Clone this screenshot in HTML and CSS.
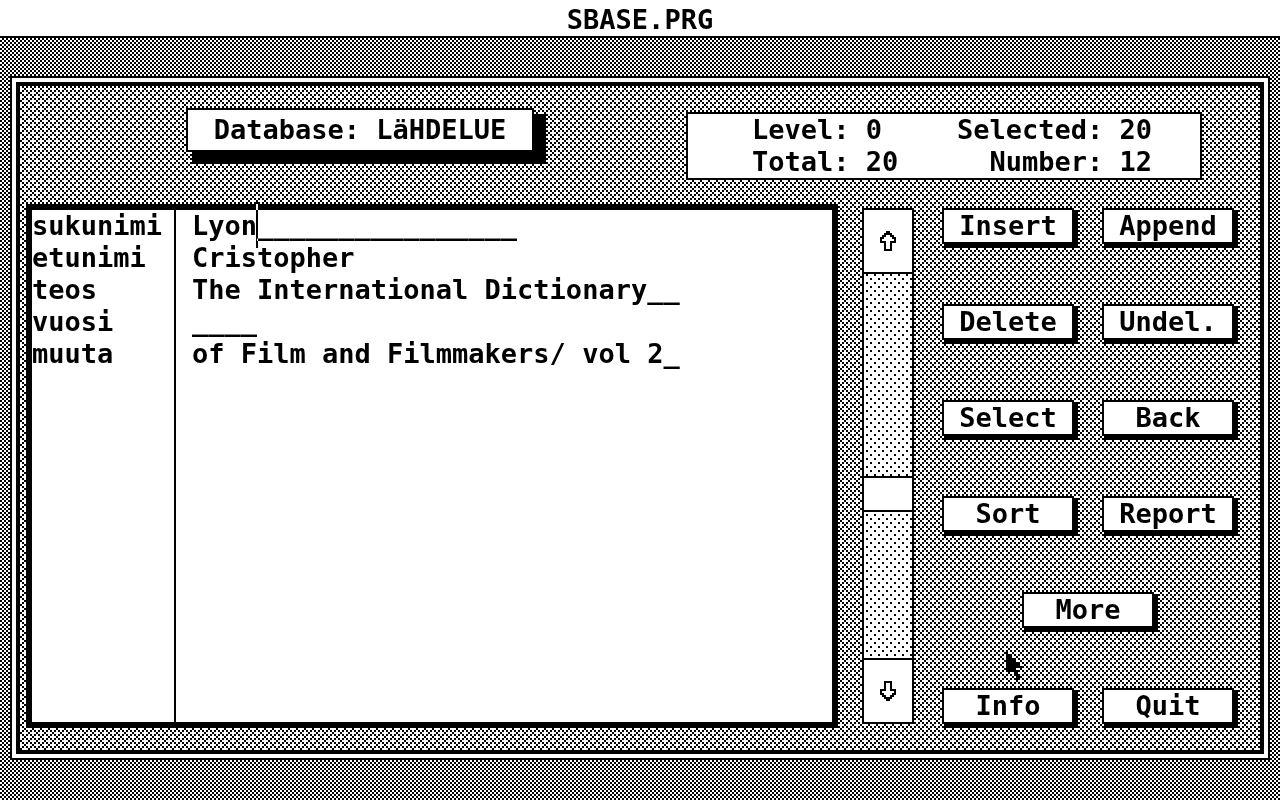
FILE: index.html
```html
<!DOCTYPE html>
<html lang="fi">
<head>
    <meta charset="UTF-8">
    <title>SBASE.PRG</title>
    <link rel="stylesheet" href="styles.css">
</head>
<body>
    <header class="menubar">SBASE.PRG</header>
    <main class="desktop">
        <div class="window">
            <div class="top">
                <h1 class="db-name">Database: LäHDELUE</h1>
                <div class="status">
                    <div class="status-left">
                        <div>Level: 0</div>
                        <div>Total: 20</div>
                    </div>
                    <div class="status-right">
                        <div>Selected: 20</div>
                        <div>Number: 12</div>
                    </div>
                </div>
            </div>
            <div class="content">
                <form class="record">
                    <div class="row">
                        <label for="sukunimi">sukunimi</label>
                        <div class="field">
                            <input type="text" id="sukunimi" value="Lyon________________">
                            <span class="caret"></span>
                        </div>
                    </div>
                    <div class="row">
                        <label for="etunimi">etunimi</label>
                        <div class="field"><input type="text" id="etunimi" value="Cristopher"></div>
                    </div>
                    <div class="row">
                        <label for="teos">teos</label>
                        <div class="field"><input type="text" id="teos" value="The International Dictionary__"></div>
                    </div>
                    <div class="row">
                        <label for="vuosi">vuosi</label>
                        <div class="field"><input type="text" id="vuosi" value="____"></div>
                    </div>
                    <div class="row">
                        <label for="muuta">muuta</label>
                        <div class="field"><input type="text" id="muuta" value="of Film and Filmmakers/ vol 2_"></div>
                    </div>
                    <div class="row rest">
                        <div class="blank"></div>
                        <div class="field"></div>
                    </div>
                </form>
                <div class="scrollbar">
                    <button type="button" class="arrow" aria-label="Up">
                        <svg width="16" height="20" viewBox="0 0 8 10" shape-rendering="crispEdges">
                            <path d="M3 0h2v1h1v1h1v1h1v3h-2v4h-4v-4h-2v-3h1v-1h1v-1h1zM3 2v1h-1v1h-1v1h2v4h2v-4h2v-1h-1v-1h-1v-1z" fill-rule="evenodd"/>
                        </svg>
                    </button>
                    <div class="track">
                        <div class="before"></div>
                        <div class="thumb"></div>
                        <div class="after"></div>
                    </div>
                    <button type="button" class="arrow" aria-label="Down">
                        <svg width="16" height="20" viewBox="0 0 8 10" shape-rendering="crispEdges">
                            <path d="M3 10h2v-1h1v-1h1v-1h1v-3h-2v-4h-4v4h-2v3h1v1h1v1h1zM3 8v-1h-1v-1h-1v-1h2v-4h2v4h2v1h-1v1h-1v1z" fill-rule="evenodd"/>
                        </svg>
                    </button>
                </div>
                <div class="commands">
                    <button type="button" class="btn">Insert</button>
                    <button type="button" class="btn">Append</button>
                    <button type="button" class="btn">Delete</button>
                    <button type="button" class="btn">Undel.</button>
                    <button type="button" class="btn">Select</button>
                    <button type="button" class="btn">Back</button>
                    <button type="button" class="btn">Sort</button>
                    <button type="button" class="btn">Report</button>
                    <button type="button" class="btn wide">More</button>
                    <button type="button" class="btn">Info</button>
                    <button type="button" class="btn">Quit</button>
                </div>
            </div>
        </div>
    </main>
    <svg class="mouse" width="16" height="28" viewBox="0 0 8 14" shape-rendering="crispEdges">
        <path d="M0 0h1v1h1v1h1v1h1v1h1v1h1v1h1v1h1v1h-3v1h1v2h1v3h-2v-2h-1v-2h-1v-1h-1v1h-2z"/>
    </svg>
</body>
</html>
```

FILE: styles.css
```css
* {
    box-sizing: border-box;
}
body {
    margin: 0;
    min-height: 100vh;
    display: flex;
    flex-direction: column;
    background: #fff;
    color: #000;
    font: bold 27px/32px "DejaVu Sans Mono", monospace;
}
button, input {
    font: inherit;
    color: inherit;
    margin: 0;
    padding: 0;
    border: 0;
    border-radius: 0;
    background: #fff;
}
.menubar {
    padding-top: 4px;
    text-align: center;
    border-bottom: 2px solid #000;
}

/* dither fills, all aligned to the screen */
.desktop, .window, .track {
    background-color: #fff;
    background-size: 8px 8px;
    background-attachment: fixed;
}
.desktop {
    flex: 1;
    display: flex;
    padding: 38px 10px 40px;
    background-image: url("data:image/svg+xml,%3Csvg xmlns='http://www.w3.org/2000/svg' width='8' height='8' viewBox='0 0 4 4' shape-rendering='crispEdges'%3E%3Cpath d='M0 0h1v1h-1zM2 0h1v1h-1zM1 1h1v1h-1zM3 1h1v1h-1zM0 2h1v1h-1zM2 2h1v1h-1zM1 3h1v1h-1zM3 3h1v1h-1z'/%3E%3C/svg%3E");
}
.window {
    flex: 1;
    display: flex;
    flex-direction: column;
    border: 4px solid #000;
    margin: 6px;
    box-shadow: 0 0 0 4px #fff, 0 0 0 6px #000;
    background-image: url("data:image/svg+xml,%3Csvg xmlns='http://www.w3.org/2000/svg' width='8' height='8' viewBox='0 0 4 4' shape-rendering='crispEdges'%3E%3Cpath d='M0 0h1v1h-1zM1 1h1v1h-1zM3 1h1v1h-1zM2 2h1v1h-1zM1 3h1v1h-1zM3 3h1v1h-1z'/%3E%3C/svg%3E");
}
.track {
    background-image: url("data:image/svg+xml,%3Csvg xmlns='http://www.w3.org/2000/svg' width='8' height='8' viewBox='0 0 4 4' shape-rendering='crispEdges'%3E%3Cpath d='M1 1h1v1h-1zM3 3h1v1h-1z'/%3E%3C/svg%3E");
}

.top {
    display: flex;
    justify-content: space-between;
    align-items: flex-start;
    padding: 22px 58px 24px 166px;
}
.db-name {
    margin: 0;
    width: 348px;
    padding: 4px 0;
    font: inherit;
    text-align: center;
    border: 2px solid #000;
    background: #fff;
    box-shadow: 9px 9px 0 3px #000;
}
.status {
    display: flex;
    justify-content: space-between;
    width: 516px;
    margin-top: 4px;
    padding: 0 48px 0 64px;
    border: 2px solid #000;
    background: #fff;
}
.status-right {
    text-align: right;
}

.content {
    flex: 1;
    display: flex;
    padding: 0 26px 22px 6px;
}
.record {
    flex: 1;
    display: flex;
    flex-direction: column;
    border: 6px solid #000;
    background: #fff;
}
.row {
    display: flex;
}
.row label, .blank {
    width: 144px;
    border-right: 2px solid #000;
}
.field {
    position: relative;
    flex: 1;
    padding-left: 16px;
}
.field input {
    display: block;
    width: 100%;
    height: 32px;
    background: none;
    outline: none;
}
.rest {
    flex: 1;
}
.caret {
    position: absolute;
    left: 80px;
    top: -8px;
    width: 2px;
    height: 46px;
    background: #fff;
    mix-blend-mode: difference;
}

.scrollbar {
    display: flex;
    flex-direction: column;
    width: 52px;
    margin: 4px 28px 4px 24px;
    border: 2px solid #000;
}
.arrow {
    display: flex;
    align-items: center;
    justify-content: center;
    height: 62px;
}
.track {
    flex: 1;
    display: flex;
    flex-direction: column;
    border: solid #000;
    border-width: 2px 0;
}
.before {
    flex: 202;
}
.thumb {
    height: 36px;
    border: solid #000;
    border-width: 2px 0;
    background: #fff;
}
.after {
    flex: 146;
}

.commands {
    display: grid;
    grid-template-columns: 132px 132px;
    column-gap: 28px;
    align-content: space-between;
    padding: 4px 0;
}
.btn {
    width: 132px;
    height: 36px;
    border: 2px solid #000;
    box-shadow: 3px 3px 0 1px #000;
}
.wide {
    grid-column: span 2;
    justify-self: center;
}

.mouse {
    position: absolute;
    left: 1006px;
    top: 652px;
}
```
